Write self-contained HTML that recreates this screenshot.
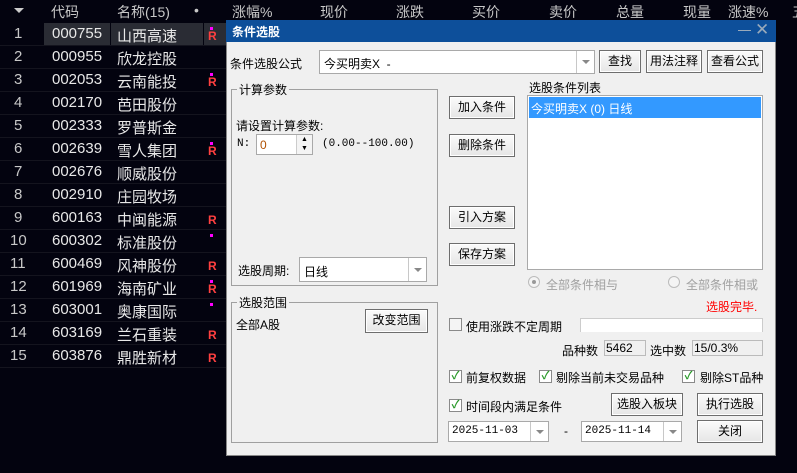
<!DOCTYPE html><html><head><meta charset="utf-8"><style>
*{box-sizing:border-box;margin:0;padding:0}
body{width:797px;height:473px;background:#03030f;position:relative;overflow:hidden;font-family:"Liberation Sans","Noto Sans CJK SC",sans-serif;font-size:12px;color:#000}
.a{position:absolute;white-space:nowrap}
.h{color:#c8c8c8;font-size:14px}
.r{color:#e8e8e8;font-size:15px}
.btn{position:absolute;background:linear-gradient(#fbfbfb,#e6e6e6);border:1px solid #6e6e6e;box-shadow:inset 0 0 0 1px #fff;text-align:center;font-size:12px;line-height:20px}
.box{position:absolute;background:#fff;border:1px solid #a9a9a9}
.grp{position:absolute;border:1px solid #a0a0a0}
.gl{position:absolute;background:#f0f0f0;padding:0 2px;top:-9px;left:5px;font-size:12px}
.cb{position:absolute;width:13px;height:13px;border:1px solid #8a8a8a;background:#fff;font-size:11px;line-height:11px;color:#2a9a2a;text-align:center;font-weight:bold}
.dd{position:absolute;right:0;top:0;bottom:0;width:18px;border-left:1px solid #c8c8c8}
.dd:after{content:"";position:absolute;left:5px;top:50%;margin-top:-2px;border:4px solid transparent;border-top:4px solid #888;border-bottom:0}
</style></head><body>
<div class="a" style="left:0;top:0;width:797px;height:22px;background:#03030f"></div>
<div class="a" style="left:14px;top:8px;border:5px solid transparent;border-top:5px solid #ccc"></div>
<div class="a h" style="left:51px;top:2px">代码</div>
<div class="a h" style="left:117px;top:2px">名称(15)</div>
<div class="a h" style="left:194px;top:2px">•</div>
<div class="a h" style="left:232px;top:2px">涨幅%</div>
<div class="a h" style="left:320px;top:2px">现价</div>
<div class="a h" style="left:396px;top:2px">涨跌</div>
<div class="a h" style="left:472px;top:2px">买价</div>
<div class="a h" style="left:549px;top:2px">卖价</div>
<div class="a h" style="left:616px;top:2px">总量</div>
<div class="a h" style="left:683px;top:2px">现量</div>
<div class="a h" style="left:728px;top:2px">涨速%</div>
<div class="a h" style="left:792px;top:2px">五</div>
<div class="a" style="left:44px;top:23px;width:66px;height:22px;background:#2a2c34"></div>
<div class="a" style="left:111px;top:23px;width:92px;height:22px;background:#2a2c34"></div>
<div class="a" style="left:204px;top:23px;width:22px;height:22px;background:#2a2c34"></div>
<div id="rows"></div>
<script>
var d=[["000755","山西高速",1],["000955","欣龙控股",0],["002053","云南能投",1],["002170","芭田股份",0],["002333","罗普斯金",0],["002639","雪人集团",1],["002676","顺威股份",0],["002910","庄园牧场",0],["600163","中闽能源",2],["600302","标准股份",3],["600469","风神股份",2],["601969","海南矿业",1],["603001","奥康国际",3],["603169","兰石重装",2],["603876","鼎胜新材",2]];
var h="";for(var i=0;i<15;i++){var y=23+i*23;h+='<div class="a" style="left:0;top:'+(y+22)+'px;width:226px;height:1px;background:#14141e"></div>';
h+='<div class="a r" style="left:'+(i<9?14:10)+'px;top:'+(y+2)+'px;color:#c8c8c8">'+(i+1)+'</div><div class="a r" style="left:52px;top:'+(y+2)+'px">'+d[i][0]+'</div><div class="a r" style="left:117px;top:'+(y+2)+'px">'+d[i][1]+'</div>';
var f=d[i][2];if(f==1||f==3)h+='<div class="a" style="left:210px;top:'+(y+4)+'px;width:3px;height:3px;background:#f0f"></div>';
if(f==1||f==2)h+='<div class="a" style="left:208px;top:'+(y+6)+'px;color:#ff4040;font-weight:bold;font-size:12px">R</div>';}
document.getElementById("rows").innerHTML=h;
</script>
<div class="a" style="left:226px;top:20px;width:550px;height:436px;background:#f0f0f0;border:1px solid #888"></div>
<div class="a" style="left:226px;top:20px;width:550px;height:22px;background:#0d4f9a"></div>
<div class="a" style="left:232px;top:23px;color:#fff;font-weight:bold;font-size:12px">条件选股</div>
<div class="a" style="left:738px;top:30px;width:13px;height:1px;background:#9ab"></div>
<div class="a" style="left:755px;top:20px;color:#9ab;font-size:17px">✕</div>
<div class="a" style="left:230px;top:55px">条件选股公式</div>
<div class="box" style="left:319px;top:50px;width:276px;height:24px"><span class="a" style="left:4px;top:4px">今买明卖X&nbsp; -</span><div class="dd"></div></div>
<div class="btn" style="left:599px;top:50px;width:42px;height:23px">查找</div>
<div class="btn" style="left:646px;top:50px;width:56px;height:23px">用法注释</div>
<div class="btn" style="left:707px;top:50px;width:56px;height:23px">查看公式</div>
<div class="grp" style="left:231px;top:89px;width:207px;height:197px"><div class="gl">计算参数</div></div>
<div class="a" style="left:236px;top:117px">请设置计算参数:</div>
<div class="a" style="left:237px;top:138px;font-family:'Liberation Mono',monospace;font-size:11px">N:</div>
<div class="box" style="left:256px;top:134px;width:57px;height:21px"><span class="a" style="left:3px;top:3px;color:#b05000">0</span><div class="a" style="right:0;top:0;width:16px;height:19px;border-left:1px solid #ccc;font-size:7px;line-height:9px;text-align:center;background:#f4f4f4">▲<br>▼</div></div>
<div class="a" style="left:322px;top:138px;font-family:'Liberation Mono',monospace;font-size:11px">(0.00--100.00)</div>
<div class="a" style="left:238px;top:262px">选股周期:</div>
<div class="box" style="left:299px;top:257px;width:128px;height:25px"><span class="a" style="left:4px;top:5px">日线</span><div class="dd"></div></div>
<div class="grp" style="left:231px;top:302px;width:207px;height:141px"><div class="gl">选股范围</div></div>
<div class="a" style="left:236px;top:316px">全部A股</div>
<div class="btn" style="left:365px;top:309px;width:63px;height:24px">改变范围</div>
<div class="btn" style="left:449px;top:96px;width:66px;height:23px">加入条件</div>
<div class="btn" style="left:449px;top:134px;width:66px;height:23px">删除条件</div>
<div class="btn" style="left:449px;top:206px;width:66px;height:23px">引入方案</div>
<div class="btn" style="left:449px;top:243px;width:66px;height:23px">保存方案</div>
<div class="a" style="left:529px;top:79px">选股条件列表</div>
<div class="box" style="left:527px;top:95px;width:236px;height:175px"><div class="a" style="left:1px;top:1px;width:232px;height:21px;background:#3399ff;color:#fff;padding:3px 2px">今买明卖X (0) 日线</div></div>
<div class="a" style="left:528px;top:276px;width:12px;height:12px;border-radius:50%;border:1px solid #bbb;background:#f4f4f4"></div><div class="a" style="left:532px;top:280px;width:4px;height:4px;border-radius:50%;background:#999"></div>
<div class="a" style="left:546px;top:276px;color:#a0a0a0">全部条件相与</div>
<div class="a" style="left:668px;top:276px;width:12px;height:12px;border-radius:50%;border:1px solid #bbb;background:#f4f4f4"></div>
<div class="a" style="left:686px;top:276px;color:#a0a0a0">全部条件相或</div>
<div class="a" style="left:706px;top:298px;color:#ff0000">选股完毕.</div>
<div class="cb" style="left:449px;top:318px;background:#f4f4f4"></div>
<div class="a" style="left:466px;top:318px">使用涨跌不定周期</div>
<div class="a" style="left:580px;top:318px;width:183px;height:14px;background:#fff;border:1px solid #ccc;border-bottom:0"></div>
<div class="a" style="left:562px;top:342px">品种数</div>
<div class="a" style="left:604px;top:340px;width:42px;height:16px;border:1px solid #bbb;padding-left:1px;line-height:14px">5462</div>
<div class="a" style="left:650px;top:342px">选中数</div>
<div class="a" style="left:692px;top:340px;width:71px;height:16px;border:1px solid #bbb;padding-left:1px;line-height:14px">15/0.3%</div>
<div class="cb" style="left:449px;top:370px">✓</div><div class="a" style="left:466px;top:369px">前复权数据</div>
<div class="cb" style="left:539px;top:370px">✓</div><div class="a" style="left:556px;top:369px">剔除当前未交易品种</div>
<div class="cb" style="left:682px;top:370px">✓</div><div class="a" style="left:700px;top:369px">剔除ST品种</div>
<div class="cb" style="left:449px;top:399px">✓</div><div class="a" style="left:466px;top:398px">时间段内满足条件</div>
<div class="btn" style="left:611px;top:393px;width:72px;height:23px">选股入板块</div>
<div class="btn" style="left:697px;top:393px;width:66px;height:23px">执行选股</div>
<div class="box" style="left:448px;top:421px;width:101px;height:21px"><span class="a" style="left:3px;top:3px;font-family:'Liberation Mono',monospace;font-size:11px">2025-11-03</span><div class="dd"></div></div>
<div class="a" style="left:564px;top:424px">-</div>
<div class="box" style="left:581px;top:421px;width:101px;height:21px"><span class="a" style="left:3px;top:3px;font-family:'Liberation Mono',monospace;font-size:11px">2025-11-14</span><div class="dd"></div></div>
<div class="btn" style="left:697px;top:420px;width:66px;height:23px">关闭</div>
</body></html>
